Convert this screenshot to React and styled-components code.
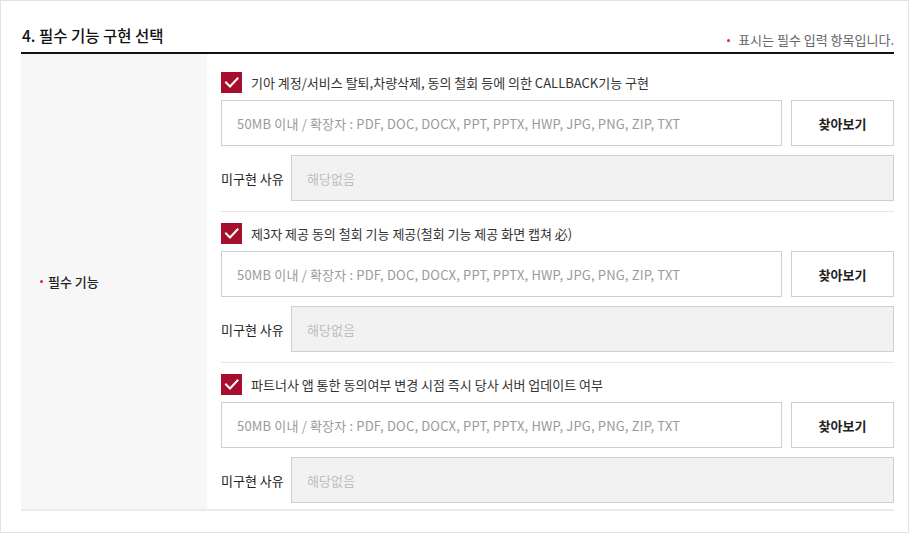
import React from "react";
import styled, { createGlobalStyle } from "styled-components";

const items = [
  "기아 계정/서비스 탈퇴,차량삭제, 동의 철회 등에 의한 CALLBACK기능 구현",
  "제3자 제공 동의 철회 기능 제공(철회 기능 제공 화면 캡쳐 必)",
  "파트너사 앱 통한 동의여부 변경 시점 즉시 당사 서버 업데이트 여부",
];

const FILE_HINT =
  "50MB 이내 / 확장자 : PDF, DOC, DOCX, PPT, PPTX, HWP, JPG, PNG, ZIP, TXT";

const CheckIcon = () => (
  <svg width="21" height="21" viewBox="0 0 21 21">
    <polyline
      points="5,10.5 9,14.5 16.5,6.5"
      fill="none"
      stroke="#fff"
      strokeWidth="2"
      strokeLinecap="square"
    />
  </svg>
);

const FeatureBlock = ({ label }) => (
  <Block>
    <CheckRow>
      <CheckBox>
        <CheckIcon />
      </CheckBox>
      <CheckLabel>{label}</CheckLabel>
    </CheckRow>
    <FileRow>
      <FileField>{FILE_HINT}</FileField>
      <BrowseButton type="button">찾아보기</BrowseButton>
    </FileRow>
    <ReasonRow>
      <ReasonLabel>미구현 사유</ReasonLabel>
      <ReasonField>해당없음</ReasonField>
    </ReasonRow>
  </Block>
);

const App = () => {
  return (
    <>
      <GlobalStyle />
      <Frame>
        <Header>
          <Title>4. 필수 기능 구현 선택</Title>
          <Note>
            <Dot />
            표시는 필수 입력 항목입니다.
          </Note>
        </Header>
        <Table>
          <HeadCell>
            <Dot />
            필수 기능
          </HeadCell>
          <BodyCell>
            {items.map((label) => (
              <FeatureBlock key={label} label={label} />
            ))}
          </BodyCell>
        </Table>
      </Frame>
    </>
  );
};

export default App;

// Styled Components

const GlobalStyle = createGlobalStyle`
  * {
    box-sizing: border-box;
  }
  body {
    margin: 0;
    background: #fff;
    font-family: "Noto Sans CJK KR", "Noto Sans", sans-serif;
    color: #222;
  }
`;

const Frame = styled.div`
  width: 909px;
  height: 533px;
  border: 1px solid #e2e2e2;
  padding: 0 14px 0 20px;
`;

const Header = styled.div`
  display: flex;
  justify-content: space-between;
  align-items: flex-end;
  padding: 23px 0 6px 0;
  border-bottom: 2px solid #111;
`;

const Title = styled.h2`
  margin: 0;
  font-size: 15.5px;
  line-height: 22px;
  font-weight: 500;
  color: #111;
  padding-left: 1px;
`;

const Note = styled.p`
  display: flex;
  align-items: center;
  gap: 8px;
  margin: 0 0 -2px;
  font-size: 13px;
  line-height: 16px;
  color: #666;
`;

const Dot = styled.span`
  display: inline-block;
  width: 3px;
  height: 3px;
  border-radius: 50%;
  background: #e8223f;
`;

const Table = styled.div`
  display: grid;
  grid-template-columns: 186px 1fr;
  border-bottom: 2px solid #ebebeb;
`;

const HeadCell = styled.div`
  display: flex;
  align-items: center;
  gap: 5px;
  padding-left: 19px;
  background: #f7f7f7;
  font-size: 13px;
  font-weight: 500;
  color: #222;
`;

const BodyCell = styled.div`
  padding: 7px 0 0 14px;
`;

const Block = styled.div`
  display: flex;
  flex-direction: column;
  padding: 11px 0 10px;
  border-bottom: 1px solid #e6e6e6;

  &:last-child {
    border-bottom: none;
    padding-bottom: 6px;
  }
`;

const CheckRow = styled.div`
  display: flex;
  align-items: center;
  gap: 9px;
  height: 21px;
  margin-bottom: 7px;
`;

const CheckBox = styled.span`
  display: flex;
  width: 21px;
  height: 21px;
  background: #a50f2d;
  flex-shrink: 0;
`;

const CheckLabel = styled.span`
  font-size: 13px;
  color: #333;
`;

const FileRow = styled.div`
  display: flex;
  gap: 9px;
  margin-bottom: 9px;
`;

const Field = styled.div`
  display: flex;
  align-items: center;
  height: 46px;
  padding-left: 15px;
  border: 1px solid #cfcfcf;
  font-size: 13px;
`;

const FileField = styled(Field)`
  flex: 1;
  color: #9a9a9a;
  background: #fff;
  letter-spacing: 0.17px;
`;

const BrowseButton = styled.button`
  width: 103px;
  height: 46px;
  border: 1px solid #cfcfcf;
  background: #fff;
  font-family: inherit;
  font-size: 13px;
  font-weight: 700;
  color: #222;
  padding: 0;
`;

const ReasonRow = styled.div`
  display: flex;
  align-items: center;
`;

const ReasonLabel = styled.span`
  width: 70px;
  font-size: 13px;
  color: #222;
`;

const ReasonField = styled(Field)`
  flex: 1;
  background: #f2f2f2;
  color: #bdbdbd;
`;
